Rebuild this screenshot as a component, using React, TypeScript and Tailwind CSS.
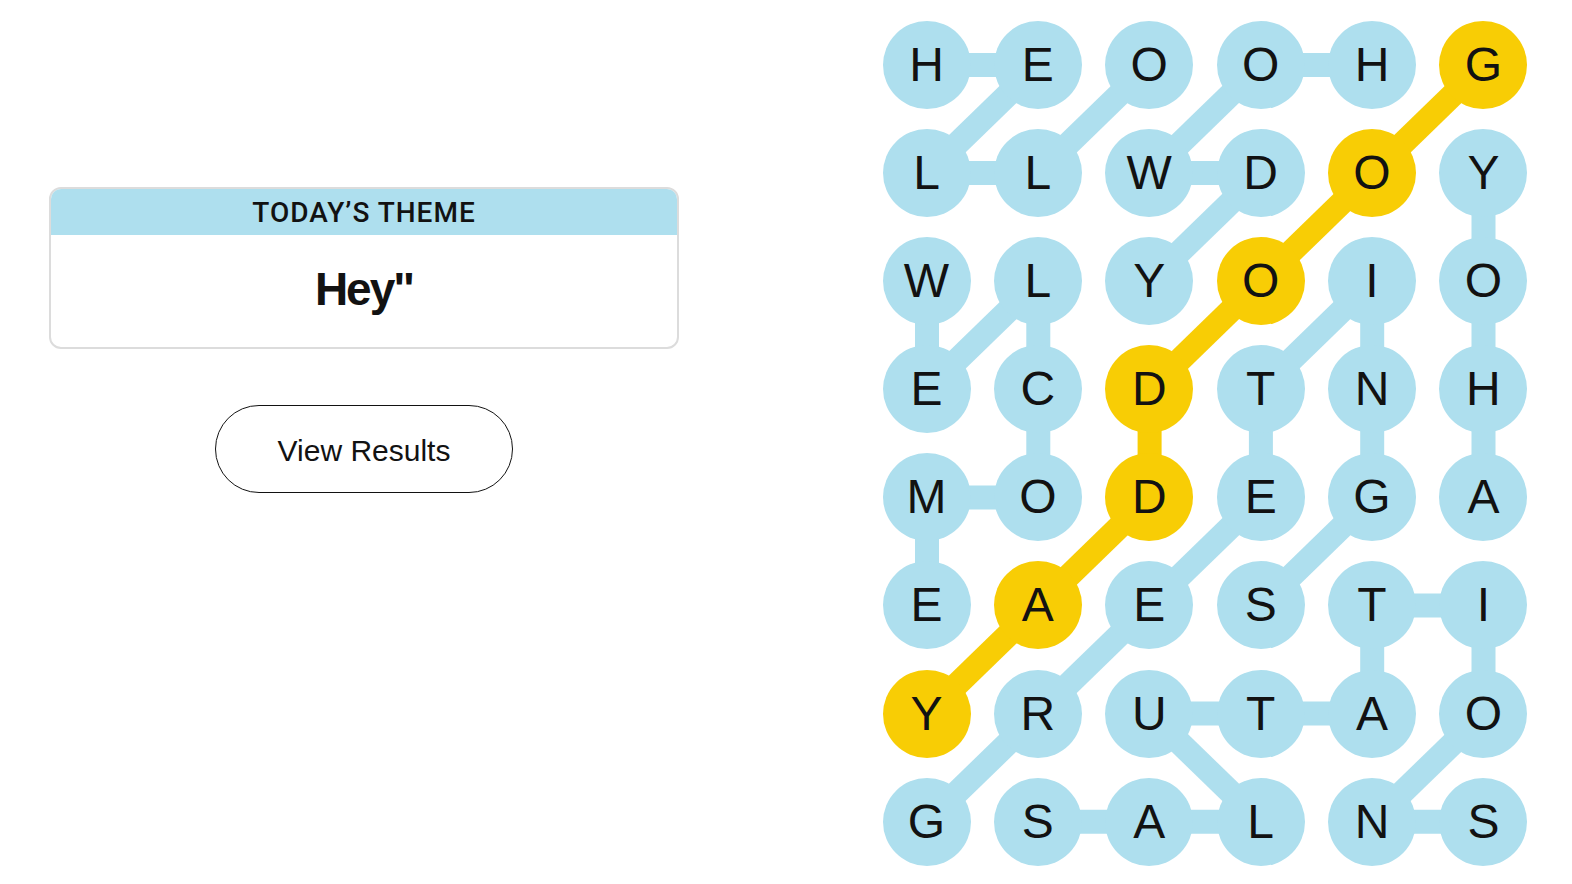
import React from 'react';

const BLUE = '#aedfee';
const YELLOW = '#f8cd05';

const letters = [
  'HEOOHG',
  'LLWDOY',
  'WLYOIO',
  'ECDTNH',
  'MODEGA',
  'EAESTI',
  'YRUTAO',
  'GSALNS',
];

const found: [number, number][][] = [
  // HELLO
  [[0, 0], [0, 1], [1, 0], [1, 1], [0, 2]],
  // HOWDY
  [[0, 4], [0, 3], [1, 2], [1, 3], [2, 2]],
  // AHOY
  [[4, 5], [3, 5], [2, 5], [1, 5]],
  // WELCOME
  [[2, 0], [3, 0], [2, 1], [3, 1], [4, 1], [4, 0], [5, 0]],
  // GREETINGS
  [[7, 0], [6, 1], [5, 2], [4, 3], [3, 3], [2, 4], [3, 4], [4, 4], [5, 3]],
  // SALUTATIONS
  [[7, 1], [7, 2], [7, 3], [6, 2], [6, 3], [6, 4], [5, 4], [5, 5], [6, 5], [7, 4], [7, 5]],
];

const spangram: [number, number][] = [[0, 5], [1, 4], [2, 3], [3, 2], [4, 2], [5, 1], [6, 0]];

const STEP_X = 111.3;
const STEP_Y = 108.1;
const R = 44;

const cx = (c: number) => R + c * STEP_X;
const cy = (r: number) => R + r * STEP_Y;

const isSpangram = (r: number, c: number) => spangram.some(([a, b]) => a === r && b === c);

const Path: React.FC<{ cells: [number, number][]; color: string }> = ({ cells, color }) => (
  <>
    {cells.slice(1).map(([r, c], i) => {
      const [pr, pc] = cells[i];
      return (
        <line
          key={i}
          x1={cx(pc)}
          y1={cy(pr)}
          x2={cx(c)}
          y2={cy(r)}
          stroke={color}
          strokeWidth={24}
        />
      );
    })}
  </>
);

const App: React.FC = () => {
  return (
    <div className="w-[1572px] h-[884px] bg-white flex text-[#121212] font-['Liberation_Sans',Arial,sans-serif] overflow-hidden">
      {/* Left column */}
      <div className="w-[679px] pl-[49px] pt-[187px] flex flex-col">
        <div className="w-[630px] rounded-[12px] border-2 border-[#dcdcdc] overflow-hidden">
          <div className="h-[48px] -mt-[2px] -mx-[2px] bg-[#aedfee] flex items-center justify-center">
            <span className="font-['Roboto',sans-serif] text-[28px] font-medium tracking-[1px] uppercase leading-none pt-[3px]">
              Today’s Theme
            </span>
          </div>
          <div className="h-[112px] flex items-center justify-center">
            <span className="text-[46px] font-bold tracking-[-2px] leading-none pb-[5px]">Hey"</span>
          </div>
        </div>
        <div className="flex justify-center mt-[56px]">
          <button className="w-[298px] h-[88px] rounded-full border-[1.5px] border-[#121212] bg-white text-[30px] leading-none pt-[4px]">
            View Results
          </button>
        </div>
      </div>

      {/* Board */}
      <div className="ml-[203.5px] mt-[21px] relative w-[645px] h-[845px]">
        <svg className="absolute inset-0" width={645} height={845}>
          {found.map((cells, i) => (
            <Path key={i} cells={cells} color={BLUE} />
          ))}
          <Path cells={spangram} color={YELLOW} />
        </svg>
        <div className="relative grid grid-cols-6 gap-x-[23.3px] gap-y-[20.1px]">
          {letters.map((row, r) =>
            row.split('').map((ch, c) => (
              <div
                key={`${r}-${c}`}
                className={`w-[88px] h-[88px] rounded-full flex items-center justify-center text-[48px] leading-none ${
                  isSpangram(r, c) ? 'bg-[#f8cd05]' : 'bg-[#aedfee]'
                }`}
              >
                {ch}
              </div>
            ))
          )}
        </div>
      </div>
    </div>
  );
};

export default App;
